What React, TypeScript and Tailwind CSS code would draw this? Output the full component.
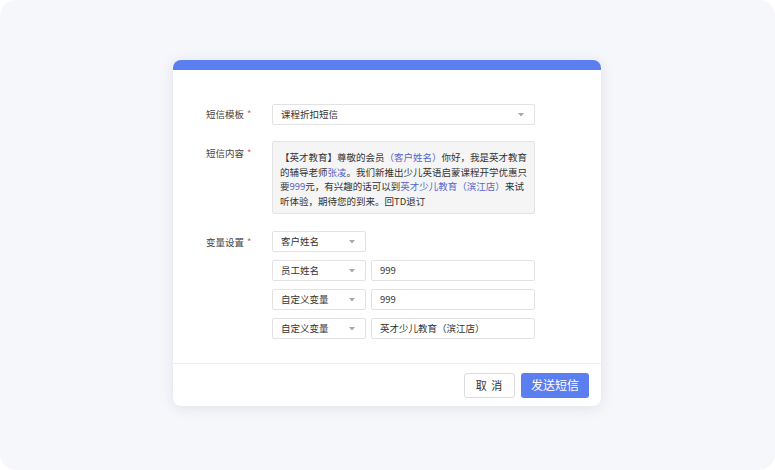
import React from "react";

const Caret: React.FC = () => (
  <svg width="6" height="4" viewBox="0 0 6 4" className="shrink-0">
    <path d="M0 0h6L3 3.5z" fill="#a8a8a8" />
  </svg>
);

const Select: React.FC<{ value: string; className?: string }> = ({ value, className }) => (
  <div
    className={`flex h-[21px] items-center justify-between rounded-[2px] border border-[#e2e2e2] bg-white pl-2 pr-[10px] text-[9.5px] text-[#333] ${className ?? ""}`}
  >
    <span>{value}</span>
    <Caret />
  </div>
);

const Input: React.FC<{ value: string }> = ({ value }) => (
  <div className="flex h-[21px] flex-1 items-center rounded-[2px] border border-[#e2e2e2] bg-white px-2 text-[9.5px] text-[#333]">
    {value}
  </div>
);

const Label: React.FC<{ text: string; className?: string }> = ({ text, className }) => (
  <div className={`w-[66px] shrink-0 text-[9.5px] text-[#444] ${className ?? ""}`}>
    {text}
    <span className="ml-[3px] text-[#e8585a]">*</span>
  </div>
);

const variables = [
  { name: "员工姓名", value: "999" },
  { name: "自定义变量", value: "999" },
  { name: "自定义变量", value: "英才少儿教育（滨江店）" },
];

const Hl: React.FC<{ children: React.ReactNode }> = ({ children }) => (
  <span className="text-[#5865c9]">{children}</span>
);

const App: React.FC = () => {
  return (
    <div className="h-[470px] w-[775px] bg-white font-['Noto_Sans_CJK_SC',sans-serif]">
      <div className="flex h-full w-full items-center justify-center rounded-2xl bg-[#f6f7fb]">
        <div className="mr-[1px] mt-[-4px] flex w-[428px] flex-col overflow-hidden rounded-lg bg-white shadow-[0_2px_14px_rgba(30,40,80,0.10)]">
          <div className="h-[10px] bg-[#5b7ff0]" />

          <div className="flex flex-col pb-6 pl-[33px] pr-[66px] pt-[34px]">
            {/* template */}
            <div className="flex items-center">
              <Label text="短信模板" />
              <Select value="课程折扣短信" className="flex-1" />
            </div>

            {/* content */}
            <div className="mt-4 flex items-start">
              <Label text="短信内容" className="pt-[5px]" />
              <div className="min-w-0 flex-1 overflow-hidden whitespace-nowrap rounded-[2px] border border-[#e4e4e4] bg-[#f5f5f5] pb-[5px] pl-[7px] pr-1 pt-[8px] text-[9.5px] leading-[14.5px] text-[#333]">
                <div>
                  【英才教育】尊敬的会员<Hl>（客户姓名）</Hl>你好，我是英才教育
                </div>
                <div>
                  的辅导老师<Hl>张凌</Hl>。我们新推出少儿英语启蒙课程开学优惠只
                </div>
                <div>
                  要<Hl>999</Hl>元，有兴趣的话可以到<Hl>英才少儿教育（滨江店）</Hl>来试
                </div>
                <div>听体验，期待您的到来。回TD退订</div>
              </div>
            </div>

            {/* variables */}
            <div className="mt-[17px] flex items-start">
              <Label text="变量设置" className="pt-[4px]" />
              <div className="flex flex-1 flex-col gap-2">
                <Select value="客户姓名" className="w-[94px]" />
                {variables.map((v, i) => (
                  <div key={i} className="flex gap-[5px]">
                    <Select value={v.name} className="w-[94px]" />
                    <Input value={v.value} />
                  </div>
                ))}
              </div>
            </div>
          </div>

          <div className="flex h-[43px] items-center justify-end gap-[6px] border-t border-[#ececec] pr-3">
            <button className="h-[25px] w-[51px] rounded-[3px] border border-[#dcdcdc] bg-white text-[11px] tracking-[1px] text-[#333]">
              取&nbsp;消
            </button>
            <button className="h-[25px] w-[68px] rounded-[3px] bg-[#5b7ff0] text-[12px] text-white">
              发送短信
            </button>
          </div>
        </div>
      </div>
    </div>
  );
};

export default App;
